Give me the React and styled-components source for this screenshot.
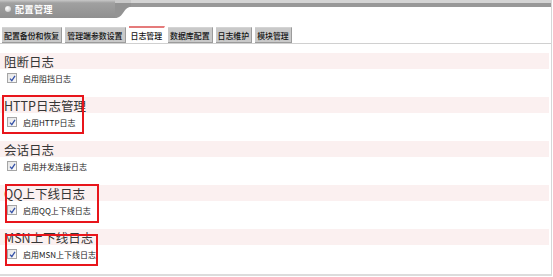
import React from "react";
import styled, { createGlobalStyle } from "styled-components";

const Global = createGlobalStyle`
  html, body { margin: 0; padding: 0; background: #fff; }
  body { font-family: "Noto Sans CJK SC", "Noto Sans", sans-serif; }
`;

const Frame = styled.div`
  width: 551px;
  height: 274px;
  border-right: 1px solid #d6d6d6;
  border-bottom: 2px solid #dcdcdc;
  display: flex;
  flex-direction: column;
`;

const HeaderBar = styled.div`
  display: flex;
  height: 18px;
`;

const TitleBlock = styled.div`
  width: 110px;
  display: flex;
  align-items: center;
  gap: 4px;
  padding-left: 5px;
  background: linear-gradient(to bottom, #c8c8c8 0, #a0a0a0 3px, #8f8f8f 100%);
  color: #fff;
  font-size: 9px;
  font-weight: bold;
  letter-spacing: 0.5px;
`;

const Bullet = styled.span`
  width: 6px;
  height: 6px;
  border-radius: 50%;
  background: radial-gradient(circle at 35% 35%, #fff 0, #e0e0e0 50%, #b0b0b0 100%);
`;

const ThinBar = styled.div`
  flex: 1;
  height: 7px;
  background: linear-gradient(to bottom, #d4d4d4 0, #d4d4d4 3px, #989898 3px, #989898 7px);
`;

const TabBar = styled.div`
  display: flex;
  align-items: flex-end;
  gap: 3px;
  margin-top: 9px;
  padding-left: 2px;
  height: 16px;
  border-bottom: 1px solid #d0d0d0;
`;

const Tab = styled.div`
  height: 14px;
  padding: 0 2px;
  display: flex;
  align-items: center;
  font-size: 7.9px;
  font-weight: 500;
  color: #111;
  white-space: nowrap;
  background: ${(p) => (p.$active ? "#fff" : "#c9c9c9")};
  border-top: ${(p) => (p.$active ? "2px solid #e57b7b" : "1px solid #d4d4d4")};
  border-right: 1px solid ${(p) => (p.$active ? "#fff" : "#9c9c9c")};
  border-bottom: 1px solid ${(p) => (p.$active ? "#fff" : "#9c9c9c")};
`;

const Content = styled.div`
  padding-top: 9px;
  display: flex;
  flex-direction: column;
  gap: 10px;
`;

const Section = styled.div`
  position: relative;
  display: flex;
  flex-direction: column;
`;

const SectionTitle = styled.div`
  height: 16px;
  margin-right: 2px;
  padding-left: 4px;
  display: flex;
  align-items: center;
  background: #fbf0f0;
  font-size: 12.5px;
  color: #363636;
  white-space: nowrap;
`;

const CheckRow = styled.label`
  height: 18px;
  display: flex;
  align-items: center;
  gap: 6px;
  padding-left: 7px;
  font-size: 8px;
  color: #222;
  white-space: nowrap;
`;

const Box = styled.span`
  width: 8px;
  height: 8px;
  border: 1px solid #a5a5a5;
  background: linear-gradient(135deg, #e4e4e4, #fafafa);
  display: flex;
  align-items: center;
  justify-content: center;
`;

const Highlight = styled.div`
  position: absolute;
  border: 2px solid #e8151b;
  box-sizing: border-box;
  pointer-events: none;
`;

const tabs = ["配置备份和恢复", "管理端参数设置", "日志管理", "数据库配置", "日志维护", "模块管理"];

const sections = [
  { title: "阻断日志", label: "启用阻挡日志" },
  { title: "HTTP日志管理", label: "启用HTTP日志", box: { top: -2, left: 2, width: 82, height: 39 } },
  { title: "会话日志", label: "启用并发连接日志" },
  { title: "QQ上下线日志", label: "启用QQ上下线日志", box: { top: -1, left: 5, width: 94, height: 39 } },
  { title: "MSN上下线日志", label: "启用MSN上下线日志", box: { top: 5, left: 5, width: 93, height: 32 } },
];

const Check = () => (
  <svg width="7" height="7" viewBox="0 0 7 7">
    <path d="M1 3.6 L2.8 5.6 L6 0.8" fill="none" stroke="#3552a8" strokeWidth="1.3" />
  </svg>
);

export default function App() {
  return (
    <>
      <Global />
      <Frame>
        <HeaderBar>
          <TitleBlock>
            <Bullet />
            配置管理
          </TitleBlock>
          <svg width="16" height="18" viewBox="0 0 16 18">
            <path d="M0 0 H16 V7 C8 7 9 18 0 18 Z" fill="#939393" />
            <rect x="0" y="0" width="16" height="3" fill="#c8c8c8" />
          </svg>
          <ThinBar />
        </HeaderBar>
        <TabBar>
          {tabs.map((t) => (
            <Tab key={t} $active={t === "日志管理"}>
              {t}
            </Tab>
          ))}
        </TabBar>
        <Content>
          {sections.map((s) => (
            <Section key={s.title}>
              <SectionTitle>{s.title}</SectionTitle>
              <CheckRow>
                <Box>
                  <Check />
                </Box>
                {s.label}
              </CheckRow>
              {s.box && (
                <Highlight
                  style={{ top: s.box.top, left: s.box.left, width: s.box.width, height: s.box.height }}
                />
              )}
            </Section>
          ))}
        </Content>
      </Frame>
    </>
  );
}
